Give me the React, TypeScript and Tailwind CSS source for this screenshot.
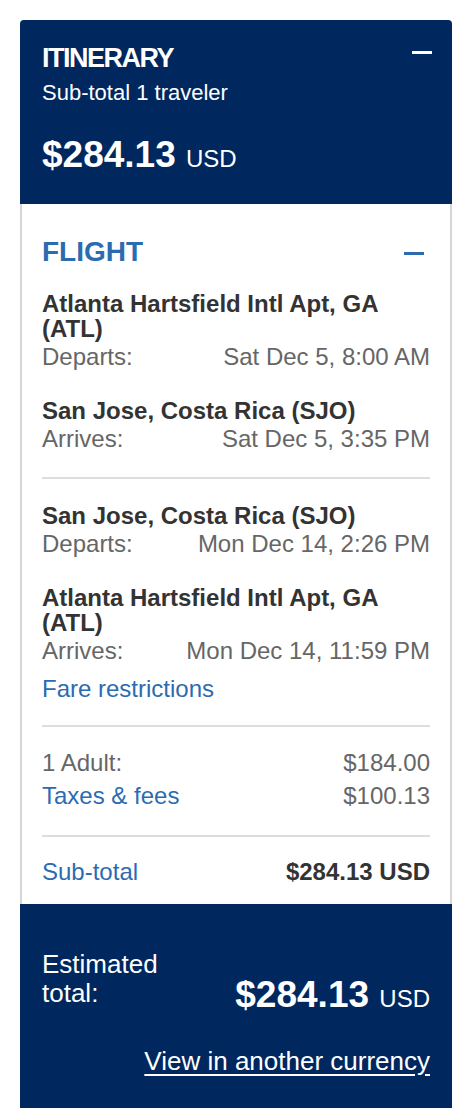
export default function App() {
  const font = { fontFamily: '"Liberation Sans", Arial, sans-serif' };
  return (
    <div className="min-h-screen w-full bg-white pt-[20px] px-[20px]" style={font}>
      <div className="w-[432px]">
        {/* Itinerary header */}
        <div className="bg-[#00285e] rounded-t-[4px] pt-[23px] pb-[29px] pl-[22px] pr-[20px] text-white">
          <div className="flex justify-between items-start">
            <div className="text-[27px] leading-[30px] font-bold tracking-[-1.5px]">ITINERARY</div>
            <div className="w-[20px] h-[3px] bg-white mt-[8px]" />
          </div>
          <div className="mt-[7px] text-[22px] leading-[26px]">Sub-total 1 traveler</div>
          <div className="mt-[29px] text-[37px] leading-[40px]">
            <span className="font-bold">$284.13 </span>
            <span className="text-[24px] leading-none">USD</span>
          </div>
        </div>

        {/* Flight details */}
        <div className="border-x-2 border-[#d6d6d6] px-[20px] pt-[32px] pb-[18px]">
          <div className="flex justify-between items-start">
            <div className="text-[28px] leading-[32px] font-bold text-[#2b6cb0]">FLIGHT</div>
            <div className="w-[20px] h-[3px] bg-[#2b6cb0] mt-[16px] mr-[6px]" />
          </div>

          <div className="mt-[23px]">
            <Stop name="Atlanta Hartsfield Intl Apt, GA (ATL)" label="Departs:" time="Sat Dec 5, 8:00 AM" />
            <div className="mt-[27px]">
              <Stop name="San Jose, Costa Rica (SJO)" label="Arrives:" time="Sat Dec 5, 3:35 PM" />
            </div>
          </div>

          <div className="mt-[24px] h-[2px] bg-[#dddddd]" />

          <div className="mt-[24px]">
            <Stop name="San Jose, Costa Rica (SJO)" label="Departs:" time="Mon Dec 14, 2:26 PM" />
            <div className="mt-[27px]">
              <Stop name="Atlanta Hartsfield Intl Apt, GA (ATL)" label="Arrives:" time="Mon Dec 14, 11:59 PM" />
            </div>
          </div>

          <div className="mt-[10px] text-[24px] leading-[28px] text-[#2b6cb0]">Fare restrictions</div>

          <div className="mt-[22px] h-[2px] bg-[#dddddd]" />

          <div className="mt-[19px] text-[24px] leading-[33px]">
            <div className="flex justify-between">
              <span className="text-[#666666]">1 Adult:</span>
              <span className="text-[#666666]">$184.00</span>
            </div>
            <div className="flex justify-between">
              <span className="text-[#2b6cb0]">Taxes &amp; fees</span>
              <span className="text-[#666666]">$100.13</span>
            </div>
          </div>

          <div className="mt-[23px] h-[2px] bg-[#dddddd]" />

          <div className="mt-[21px] flex justify-between text-[24px] leading-[28px]">
            <span className="text-[#2b6cb0]">Sub-total</span>
            <span className="font-bold text-[#333333]">$284.13 USD</span>
          </div>
        </div>

        {/* Estimated total */}
        <div className="bg-[#00285e] pt-[46px] pb-[40px] px-[22px] text-white">
          <div className="flex justify-between items-start">
            <div className="w-[150px] text-[26px] leading-[29px]">Estimated total:</div>
            <div className="mt-[25px] text-[37px] leading-[40px] whitespace-nowrap">
              <span className="font-bold">$284.13 </span>
              <span className="text-[24px] leading-none">USD</span>
            </div>
          </div>
          <div className="mt-[31px] text-right text-[26px] leading-[30px]">
            <a className="underline underline-offset-[4px]">View in another currency</a>
          </div>
        </div>
      </div>
    </div>
  );
}

function Stop({ name, label, time }: { name: string; label: string; time: string }) {
  return (
    <div>
      <div className="text-[24px] leading-[25px] font-bold text-[#333333]">{name}</div>
      <div className="mt-[2px] flex justify-between text-[24px] leading-[28px] text-[#666666]">
        <span>{label}</span>
        <span>{time}</span>
      </div>
    </div>
  );
}
